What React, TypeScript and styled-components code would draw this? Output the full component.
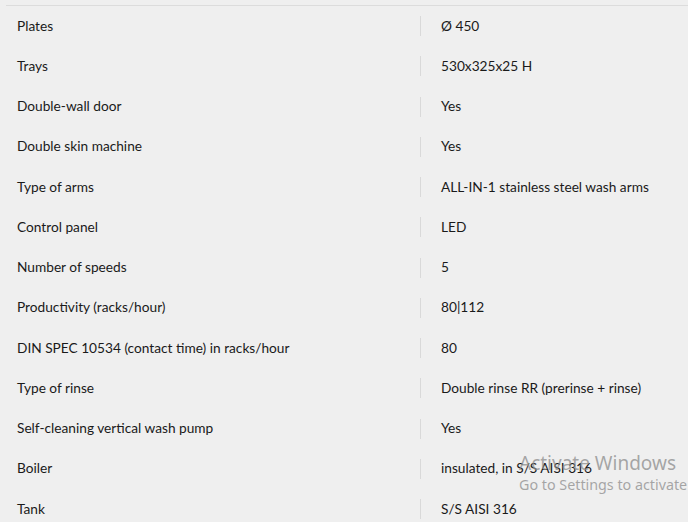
import React from "react";
import styled, { createGlobalStyle } from "styled-components";

const Global = createGlobalStyle`
  html, body { margin: 0; padding: 0; background: #efefef; overflow: hidden; }
  body { font-family: Lato, "Noto Sans", sans-serif; }
`;

const Page = styled.div`
  width: 688px;
  height: 522px;
  overflow: hidden;
  padding-top: 5px;
  padding-left: 6px;
  box-sizing: border-box;
  position: relative;
`;

const Table = styled.div`
  width: 828px;
  border-top: 1px solid #dcdcdc;
`;

const Row = styled.div`
  display: grid;
  grid-template-columns: 414px 1fr;
  height: 40.25px;
  align-items: center;
`;

const Label = styled.div`
  padding-left: 11px;
  padding-bottom: 1px;
  font-size: 13.7px;
  line-height: 20px;
  color: #1a1a1a;
  white-space: nowrap;
`;

const Value = styled.div`
  position: relative;
  padding-left: 21px;
  padding-bottom: 1px;
  font-size: 13.7px;
  line-height: 20px;
  color: #1a1a1a;
  white-space: nowrap;
  &::before {
    content: "";
    position: absolute;
    left: 0;
    top: 0.5px;
    height: 20px;
    border-left: 1px solid #d9d9d9;
  }
`;

const Watermark = styled.div`
  position: absolute;
  left: 519px;
  top: 451px;
  color: rgba(140, 140, 140, 0.75);
  font-family: "Noto Sans", "Open Sans", sans-serif;
  pointer-events: none;
  white-space: nowrap;
`;

const WmTitle = styled.div`
  font-size: 19px;
  line-height: 24px;
`;

const WmSub = styled.div`
  font-size: 14.3px;
  line-height: 20px;
`;

const specs: [string, string][] = [
  ["Plates", "Ø 450"],
  ["Trays", "530x325x25 H"],
  ["Double-wall door", "Yes"],
  ["Double skin machine", "Yes"],
  ["Type of arms", "ALL-IN-1 stainless steel wash arms"],
  ["Control panel", "LED"],
  ["Number of speeds", "5"],
  ["Productivity (racks/hour)", "80|112"],
  ["DIN SPEC 10534 (contact time) in racks/hour", "80"],
  ["Type of rinse", "Double rinse RR (prerinse + rinse)"],
  ["Self-cleaning vertical wash pump", "Yes"],
  ["Boiler", "insulated, in S/S AISI 316"],
  ["Tank", "S/S AISI 316"],
];

export default function App() {
  return (
    <>
      <Global />
      <Page>
        <Table>
          {specs.map(([k, v]) => (
            <Row key={k}>
              <Label>{k}</Label>
              <Value>{v}</Value>
            </Row>
          ))}
        </Table>
        <Watermark>
          <WmTitle>Activate Windows</WmTitle>
          <WmSub>Go to Settings to activate</WmSub>
        </Watermark>
      </Page>
    </>
  );
}
